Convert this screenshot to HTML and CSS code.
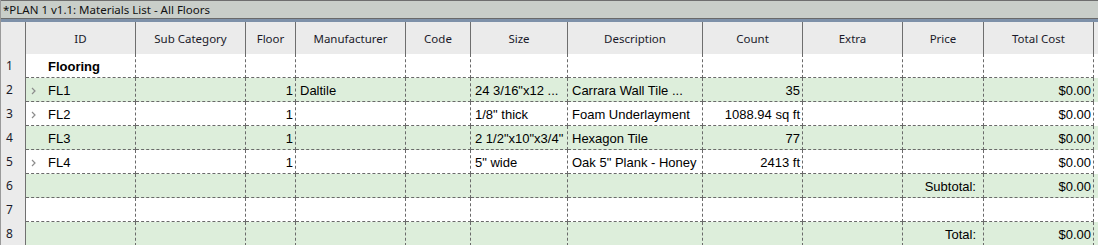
FILE: index.html
```html
<!DOCTYPE html>
<html lang="en">
<head>
    <meta charset="UTF-8">
    <title>Materials List - All Floors</title>
    <link rel="stylesheet" href="styles.css">
</head>
<body>
    <div class="window">
        <div class="titlebar">*PLAN 1 v1.1: Materials List - All Floors</div>
        <div class="sheet">
            <div class="row head">
                <div class="num"></div>
                <div class="cell">ID</div>
                <div class="cell">Sub Category</div>
                <div class="cell">Floor</div>
                <div class="cell">Manufacturer</div>
                <div class="cell">Code</div>
                <div class="cell">Size</div>
                <div class="cell">Description</div>
                <div class="cell">Count</div>
                <div class="cell">Extra</div>
                <div class="cell">Price</div>
                <div class="cell">Total Cost</div>
            </div>

            <div class="row">
                <div class="num">1</div>
                <div class="cell id"><span class="twisty"></span><b>Flooring</b></div>
                <div class="cell"></div>
                <div class="cell"></div>
                <div class="cell"></div>
                <div class="cell"></div>
                <div class="cell"></div>
                <div class="cell"></div>
                <div class="cell"></div>
                <div class="cell"></div>
                <div class="cell"></div>
                <div class="cell"></div>
            </div>

            <div class="row alt">
                <div class="num">2</div>
                <div class="cell id"><span class="twisty"><svg width="5" height="8" viewBox="0 0 5 8"><polyline points="1,1 4,4 1,7" /></svg></span>FL1</div>
                <div class="cell"></div>
                <div class="cell r">1</div>
                <div class="cell">Daltile</div>
                <div class="cell"></div>
                <div class="cell">24 3/16"x12 ...</div>
                <div class="cell">Carrara Wall Tile ...</div>
                <div class="cell r">35</div>
                <div class="cell"></div>
                <div class="cell"></div>
                <div class="cell r">$0.00</div>
            </div>

            <div class="row">
                <div class="num">3</div>
                <div class="cell id"><span class="twisty"><svg width="5" height="8" viewBox="0 0 5 8"><polyline points="1,1 4,4 1,7" /></svg></span>FL2</div>
                <div class="cell"></div>
                <div class="cell r">1</div>
                <div class="cell"></div>
                <div class="cell"></div>
                <div class="cell">1/8" thick</div>
                <div class="cell">Foam Underlayment</div>
                <div class="cell r">1088.94 sq ft</div>
                <div class="cell"></div>
                <div class="cell"></div>
                <div class="cell r">$0.00</div>
            </div>

            <div class="row alt">
                <div class="num">4</div>
                <div class="cell id"><span class="twisty"></span>FL3</div>
                <div class="cell"></div>
                <div class="cell r">1</div>
                <div class="cell"></div>
                <div class="cell"></div>
                <div class="cell">2 1/2"x10"x3/4"</div>
                <div class="cell">Hexagon Tile</div>
                <div class="cell r">77</div>
                <div class="cell"></div>
                <div class="cell"></div>
                <div class="cell r">$0.00</div>
            </div>

            <div class="row">
                <div class="num">5</div>
                <div class="cell id"><span class="twisty"><svg width="5" height="8" viewBox="0 0 5 8"><polyline points="1,1 4,4 1,7" /></svg></span>FL4</div>
                <div class="cell"></div>
                <div class="cell r">1</div>
                <div class="cell"></div>
                <div class="cell"></div>
                <div class="cell">5" wide</div>
                <div class="cell">Oak 5" Plank - Honey</div>
                <div class="cell r">2413 ft</div>
                <div class="cell"></div>
                <div class="cell"></div>
                <div class="cell r">$0.00</div>
            </div>

            <div class="row alt">
                <div class="num">6</div>
                <div class="cell"></div>
                <div class="cell"></div>
                <div class="cell"></div>
                <div class="cell"></div>
                <div class="cell"></div>
                <div class="cell"></div>
                <div class="cell"></div>
                <div class="cell"></div>
                <div class="cell"></div>
                <div class="cell r label">Subtotal:</div>
                <div class="cell r">$0.00</div>
            </div>

            <div class="row">
                <div class="num">7</div>
                <div class="cell"></div>
                <div class="cell"></div>
                <div class="cell"></div>
                <div class="cell"></div>
                <div class="cell"></div>
                <div class="cell"></div>
                <div class="cell"></div>
                <div class="cell"></div>
                <div class="cell"></div>
                <div class="cell"></div>
                <div class="cell"></div>
            </div>

            <div class="row alt">
                <div class="num">8</div>
                <div class="cell"></div>
                <div class="cell"></div>
                <div class="cell"></div>
                <div class="cell"></div>
                <div class="cell"></div>
                <div class="cell"></div>
                <div class="cell"></div>
                <div class="cell"></div>
                <div class="cell"></div>
                <div class="cell r label">Total:</div>
                <div class="cell r">$0.00</div>
            </div>
        </div>
    </div>
</body>
</html>
```

FILE: styles.css
```css
html, body {
    margin: 0;
    padding: 0;
    background: #fff;
    overflow: hidden;
}
.window {
    border-left: 1px solid #9a9a9a;
    height: 245px;
    overflow: hidden;
}
.titlebar {
    height: 17px;
    line-height: 17px;
    padding-left: 2px;
    background: #c9cec9;
    border-top: 1px solid #6e6e6e;
    border-bottom: 1px solid #6a6a6a;
    font-family: "Noto Sans", sans-serif;
    font-size: 11.5px;
    color: #111;
    white-space: nowrap;
}
.sheet {
    border-top: 3px solid #7e91a9;
}
.row {
    display: grid;
    grid-template-columns: 25px 110px 110px 50px 110px 65px 97px 135px 100px 100px 81px 110px;
    height: 24px;
    background: #fff;
}
.row.alt {
    background: #ddeedb;
}
.num {
    box-sizing: border-box;
    background: #ebebeb;
    border-right: 1px solid #707070;
    padding-left: 5px;
    font-family: "Noto Sans", sans-serif;
    font-size: 12px;
    line-height: 24px;
    color: #1a1a2a;
}
.cell {
    box-sizing: border-box;
    border-right: 1px dashed #6a6a6a;
    border-bottom: 1px dashed #6a6a6a;
    padding: 2px 3px 0 4px;
    font-family: "Liberation Sans", Arial, sans-serif;
    font-size: 13px;
    line-height: 21px;
    color: #000;
    white-space: nowrap;
    overflow: hidden;
}
.cell.r {
    text-align: right;
    padding-left: 2px;
    padding-right: 2px;
}
.cell.label {
    padding-right: 7px;
}
.cell.id {
    display: flex;
    padding-left: 5px;
}
.cell.id b {
    font-weight: bold;
}
.twisty {
    width: 17px;
    flex: none;
    display: flex;
    align-items: center;
    padding-top: 1px;
}
.twisty polyline {
    fill: none;
    stroke: #8c8c8c;
    stroke-width: 1.2;
}
.head {
    height: 32px;
    background: #ebebeb;
}
.head .num {
    border-right: 1px solid #707070;
}
.head .cell {
    border-right: 1px solid #6e6e6e;
    border-bottom: none;
    padding: 0;
    text-align: center;
    font-family: "Noto Sans", sans-serif;
    font-size: 11.5px;
    line-height: 34px;
    color: #1a1a2a;
}
```
